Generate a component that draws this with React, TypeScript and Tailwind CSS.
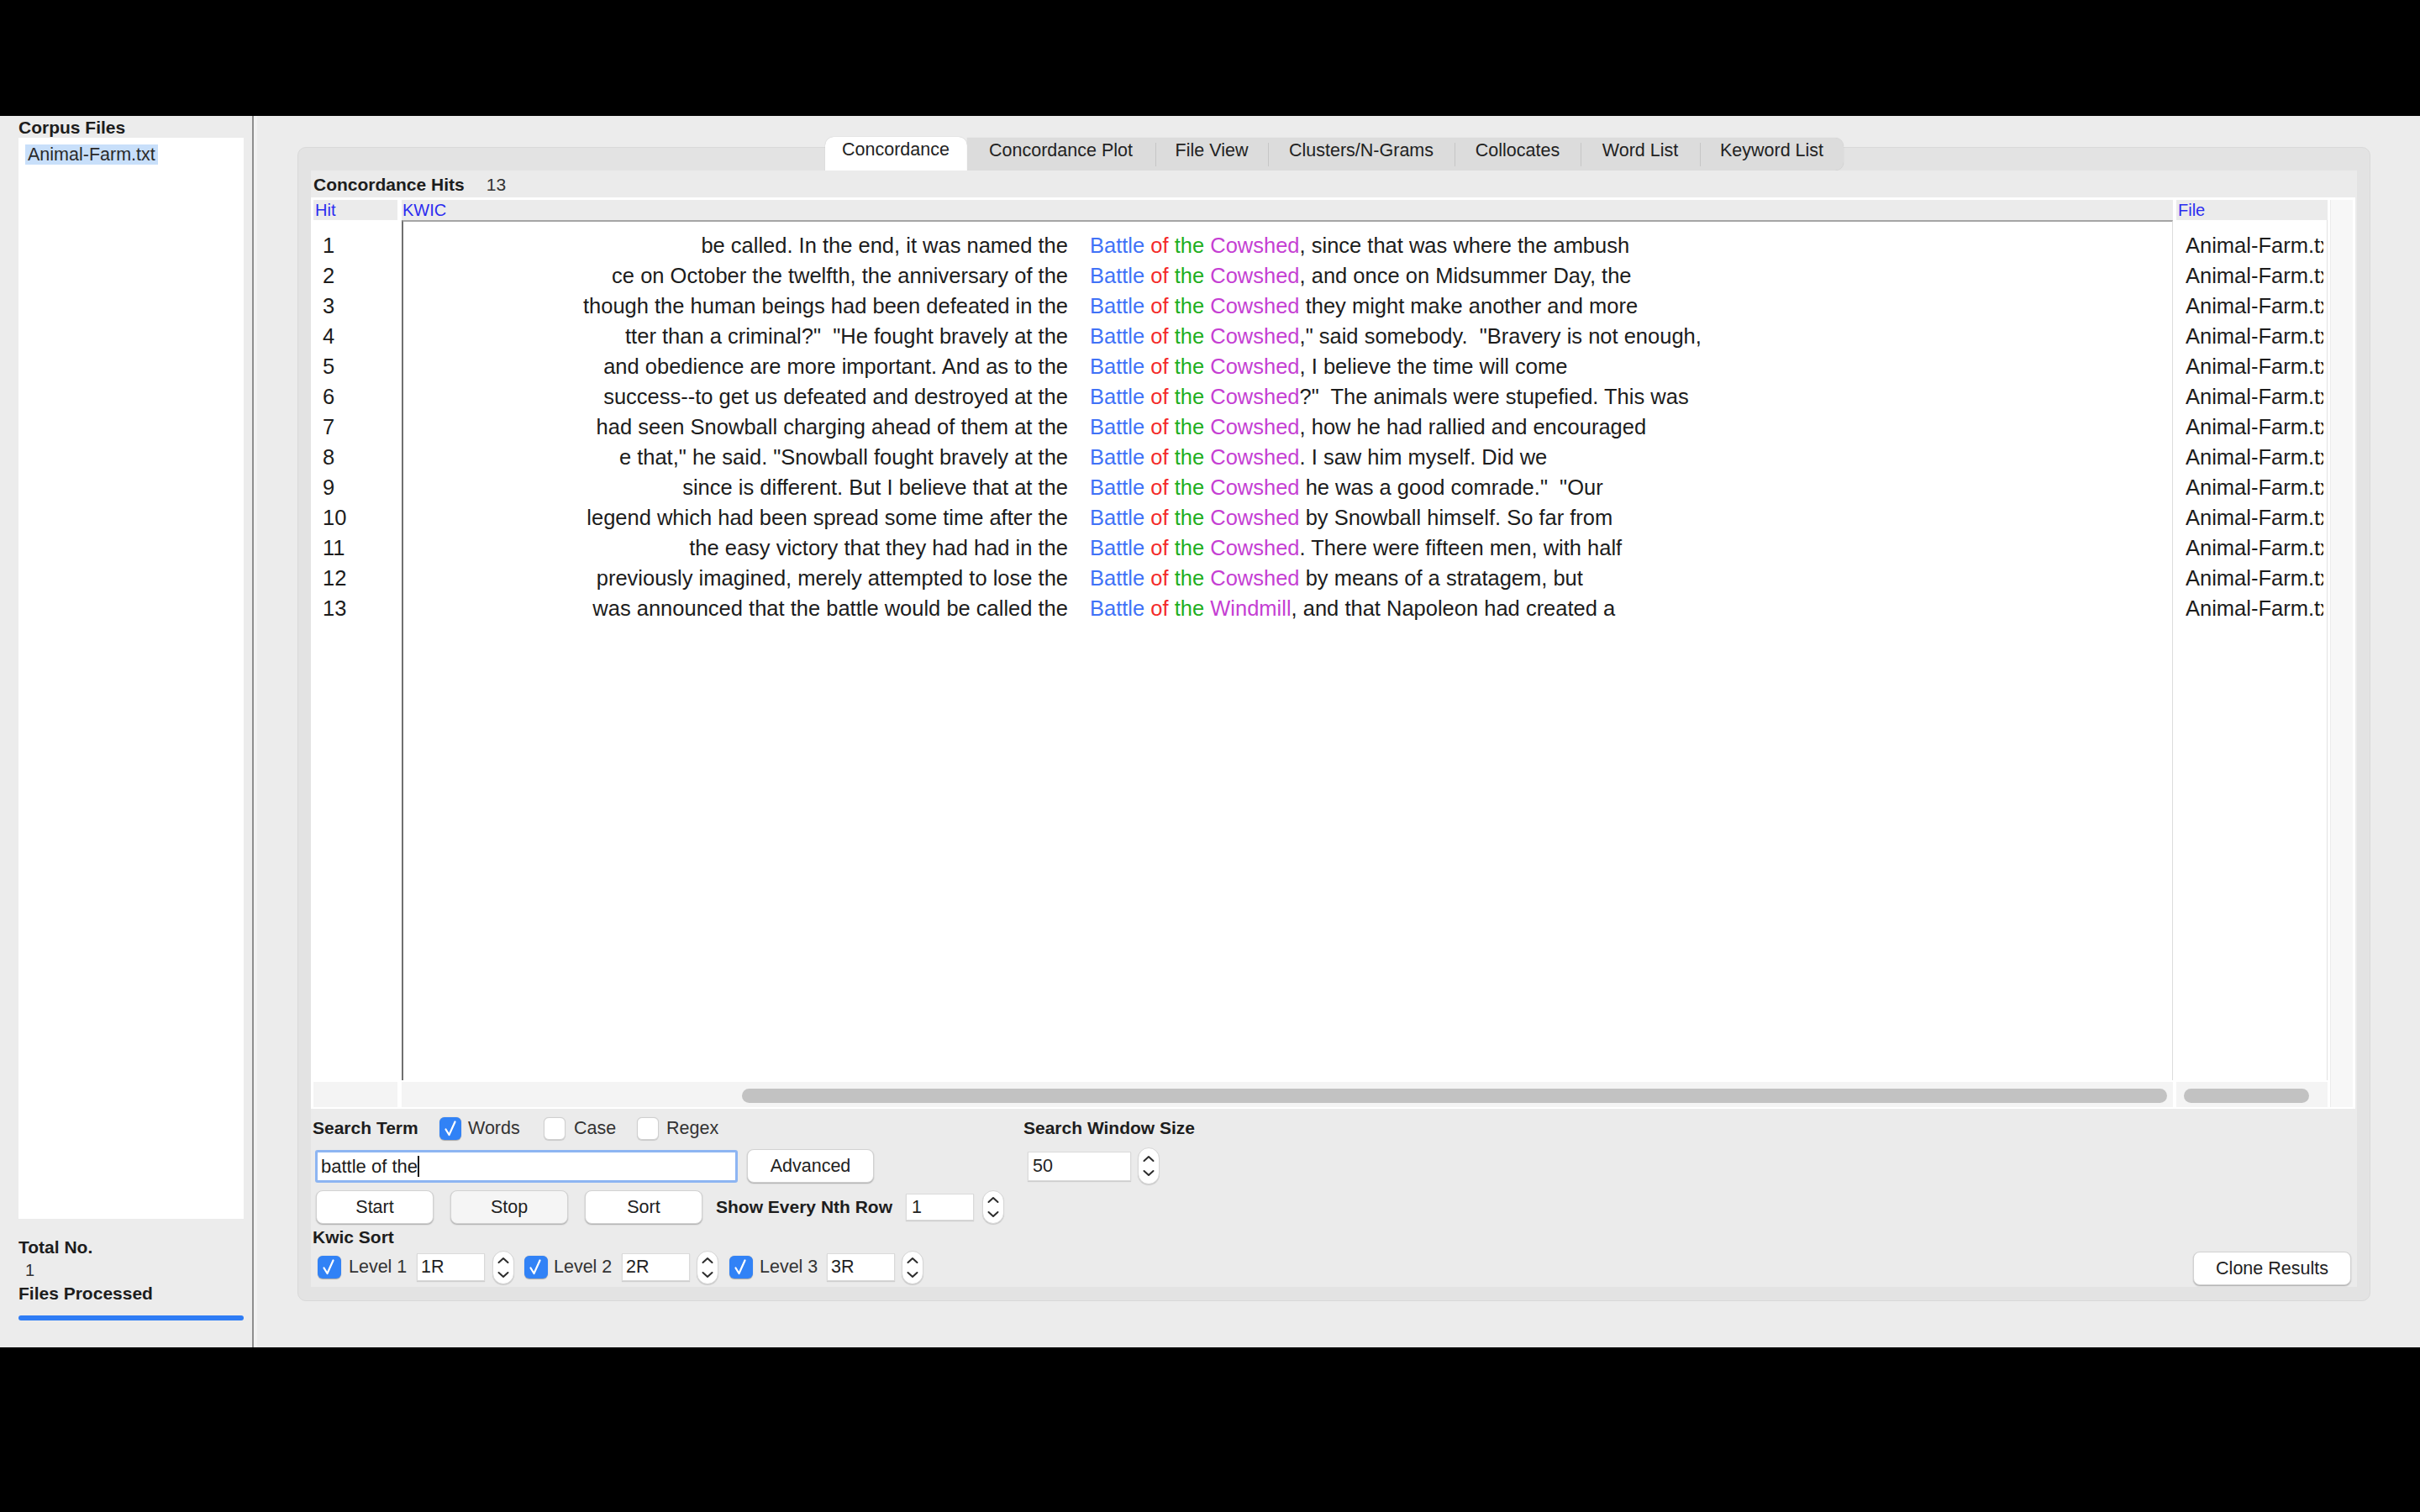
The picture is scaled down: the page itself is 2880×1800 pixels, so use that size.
import React from "react";

const rows: [string, string, string][] = [
  ["be called. In the end, it was named the", "Cowshed", ", since that was where the ambush"],
  ["ce on October the twelfth, the anniversary of the", "Cowshed", ", and once on Midsummer Day, the"],
  ["though the human beings had been defeated in the", "Cowshed", " they might make another and more"],
  ["tter than a criminal?\"  \"He fought bravely at the", "Cowshed", ",\" said somebody.  \"Bravery is not enough,"],
  ["and obedience are more important. And as to the", "Cowshed", ", I believe the time will come"],
  ["success--to get us defeated and destroyed at the", "Cowshed", "?\"  The animals were stupefied. This was"],
  ["had seen Snowball charging ahead of them at the", "Cowshed", ", how he had rallied and encouraged"],
  ["e that,\" he said. \"Snowball fought bravely at the", "Cowshed", ". I saw him myself. Did we"],
  ["since is different. But I believe that at the", "Cowshed", " he was a good comrade.\"  \"Our"],
  ["legend which had been spread some time after the", "Cowshed", " by Snowball himself. So far from"],
  ["the easy victory that they had had in the", "Cowshed", ". There were fifteen men, with half"],
  ["previously imagined, merely attempted to lose the", "Cowshed", " by means of a stratagem, but"],
  ["was announced that the battle would be called the", "Windmill", ", and that Napoleon had created a"],
];

function CheckBox({ checked, className }: { checked: boolean; className?: string }) {
  if (checked) {
    return (
      <div
        className={`w-[26px] h-[27px] rounded-[6px] bg-[#3182f6] shrink-0 shadow-[0_0.5px_1px_rgba(0,0,0,0.3)] ${className ?? ""}`}
      >
        <svg width="26" height="27" viewBox="0 0 26 27">
          <path
            d="M7.5 14.5 L11.5 21 L18.5 5.5"
            fill="none"
            stroke="white"
            strokeWidth="2.2"
            strokeLinecap="round"
            strokeLinejoin="round"
          />
        </svg>
      </div>
    );
  }
  return (
    <div
      className={`w-[26px] h-[27px] rounded-[6px] bg-white border border-[#d0d0d0] shadow-[0_0.5px_1px_rgba(0,0,0,0.15)] shrink-0 ${className ?? ""}`}
    />
  );
}

function Spinner({ className }: { className?: string }) {
  return (
    <div
      className={`w-[26px] h-[40px] rounded-full bg-white border border-[#d6d6d6] shadow-[0_1px_1px_rgba(0,0,0,0.15)] shrink-0 flex items-center justify-center ${className ?? ""}`}
    >
      <svg width="24" height="38" viewBox="0 0 24 38">
        <path d="M6.5 13 L12 8 L17.5 13" fill="none" stroke="#2b2b2b" strokeWidth="2" strokeLinecap="round" strokeLinejoin="round" />
        <path d="M6.5 25 L12 30 L17.5 25" fill="none" stroke="#2b2b2b" strokeWidth="2" strokeLinecap="round" strokeLinejoin="round" />
      </svg>
    </div>
  );
}

function Btn({ label, className }: { label: string; className?: string }) {
  return (
    <div
      className={`h-[40px] rounded-[8px] border-[0.5px] border-[#d2d2d2] shadow-[0_1px_1.5px_rgba(0,0,0,0.28)] flex items-center justify-center text-[21.5px] text-[#222] shrink-0 ${className ?? ""}`}
    >
      {label}
    </div>
  );
}

const tabs: [string, string][] = [
  ["Concordance Plot", "w-[224px]"],
  ["File View", "w-[133px]"],
  ["Clusters/N-Grams", "w-[221px]"],
  ["Collocates", "w-[149px]"],
  ["Word List", "w-[141px]"],
  ["Keyword List", "w-[170px]"],
];

export default function App() {
  return (
    <div className="w-[2880px] h-[1800px] bg-black flex flex-col overflow-hidden font-['Liberation_Sans',Arial,sans-serif] text-[#222]">
      <div className="h-[138px] shrink-0" />
      <div className="h-[1466px] shrink-0 flex bg-[#ececec]">
        {/* Left panel */}
        <div className="w-[302px] shrink-0 border-r-2 border-[#8e8e8e] flex flex-col pl-[22px] pr-[10px] pt-[2px]">
          <div className="h-[24px] leading-[24px] text-[21px] font-bold text-[#1d1d1d]">Corpus Files</div>
          <div className="h-[1287px] bg-white pt-[8px] pl-[8px]">
            <div className="inline-block h-[24px] leading-[24px] bg-[#c8dffa] px-[3px] text-[21.5px] text-[#2a2a2a]">
              Animal-Farm.txt
            </div>
          </div>
          <div className="mt-[21px] h-[26px] leading-[26px] text-[21px] font-bold text-[#1d1d1d]">Total No.</div>
          <div className="h-[28px] leading-[28px] text-[20px] pl-[8px] text-[#333]">1</div>
          <div className="h-[28px] leading-[28px] text-[21px] font-bold text-[#1d1d1d]">Files Processed</div>
          <div className="mt-[12px] h-[6px] rounded-full bg-[#2e7cf5]" />
        </div>
        <div className="w-[4px] shrink-0 bg-[#f2f2f2]" />

        {/* Main */}
        <div className="flex-1 pl-[48px] pt-[37px] pr-[59px]">
          <div className="h-[1374px] bg-[#e3e3e3] border border-[#d9d9d9] rounded-[10px] flex flex-col">
            {/* Tabs */}
            <div className="self-center -mt-[13px] h-[40px] flex shrink-0">
              <div className="w-[169px] h-[40px] bg-white rounded-t-[10px] leading-[30px] text-center text-[21.5px] text-[#222] shadow-[0_0_1px_rgba(0,0,0,0.25)]">
                Concordance
              </div>
              <div className="mt-[1px] h-[39px] bg-[#dcdcdc] rounded-r-[10px] flex items-start shadow-[0_0_1px_rgba(0,0,0,0.2)]">
                {tabs.map(([t, w], i) => (
                  <div key={t} className="flex items-start">
                    {i > 0 && <div className="w-[1px] h-[28px] mt-[6px] bg-[#c6c6c6]" />}
                    <div className={`${w} h-[39px] leading-[30px] text-center text-[21.5px] text-[#222]`}>{t}</div>
                  </div>
                ))}
              </div>
            </div>

            {/* Inner panel */}
            <div className="mx-[15px] h-[1329px] bg-[#ebebeb] flex flex-col">
              <div className="mt-[4px] h-[26px] leading-[26px] pl-[3px] flex text-[21px]">
                <span className="font-bold text-[#1d1d1d]">Concordance Hits</span>
                <span className="ml-[26px] text-[#333]">13</span>
              </div>

              {/* Table */}
              <div className="mt-[2px] h-[1085px] mr-[2px] bg-white flex pt-[3px] pl-[3px] pr-[3px] pb-[2px]">
                {/* Hit column */}
                <div className="w-[100px] shrink-0 flex flex-col">
                  <div className="h-[24px] leading-[24px] bg-[#ebebeb] pl-[2px] text-[20px] text-[#2b2bf0]">Hit</div>
                  <div className="h-[1024px] bg-white pt-[12px] pl-[11px]">
                    {rows.map((_, i) => (
                      <div key={i} className="h-[36px] leading-[36px] text-[25.5px] text-[#1c1c1c]">
                        {i + 1}
                      </div>
                    ))}
                  </div>
                  <div className="mt-[2px] h-[30px] bg-[#f4f4f4]" />
                </div>

                {/* KWIC column */}
                <div className="ml-[5px] w-[2108px] shrink-0 flex flex-col">
                  <div className="h-[24px] leading-[24px] bg-[#ebebeb] pl-[1px] text-[20px] text-[#2b2bf0]">KWIC</div>
                  <div className="h-[1024px] bg-white border-t-2 border-t-[#a5a5a5] border-l-2 border-l-[#707070] border-r border-r-[#dddddd] pt-[10px]">
                    {rows.map((r, i) => (
                      <div key={i} className="h-[36px] leading-[36px] flex whitespace-pre text-[25.5px] text-[#1c1c1c]">
                        <div className="w-[791px] shrink-0 text-right overflow-hidden">{r[0]}</div>
                        <div className="ml-[26px]">
                          <span className="text-[#3f72f7]">Battle</span>
                          {" "}
                          <span className="text-[#f42a2a]">of</span>
                          {" "}
                          <span className="text-[#1faf1f]">the</span>
                          {" "}
                          <span className="text-[#c53fd3]">{r[1]}</span>
                          {r[2]}
                        </div>
                      </div>
                    ))}
                  </div>
                  <div className="mt-[2px] h-[30px] bg-[#f4f4f4] pt-[8px] pl-[405px]">
                    <div className="w-[1696px] h-[17px] rounded-full bg-[#c2c2c2]" />
                  </div>
                </div>

                {/* File column */}
                <div className="ml-[4px] w-[180px] shrink-0 flex flex-col">
                  <div className="h-[24px] leading-[24px] bg-[#ebebeb] pl-[2px] text-[20px] text-[#2b2bf0]">File</div>
                  <div className="h-[1024px] bg-white border-r border-[#e2e2e2] pt-[12px] pl-[11px]">
                    {rows.map((_, i) => (
                      <div key={i} className="w-[164px] h-[36px] leading-[36px] overflow-hidden whitespace-nowrap text-[25.5px] text-[#1c1c1c]">
                        Animal-Farm.txt
                      </div>
                    ))}
                  </div>
                  <div className="mt-[2px] h-[30px] bg-[#f4f4f4] pt-[8px] pl-[9px]">
                    <div className="w-[149px] h-[17px] rounded-full bg-[#c2c2c2]" />
                  </div>
                </div>

                {/* Vertical scroll column */}
                <div className="ml-[3px] w-[27px] shrink-0 bg-[#f7f7f7] border-l border-[#ececec]" />
              </div>

              {/* Controls */}
              <div className="flex-1 flex">
                <div className="w-[848px] shrink-0 flex flex-col">
                  {/* Row A */}
                  <div className="mt-[8px] h-[30px] flex items-center pl-[2px]">
                    <div className="w-[151px] text-[21px] font-bold text-[#1d1d1d]">Search Term</div>
                    <CheckBox checked />
                    <div className="ml-[8px] w-[90px] text-[21.5px] text-[#333]">Words</div>
                    <CheckBox checked={false} />
                    <div className="ml-[10px] w-[75px] text-[21.5px] text-[#333]">Case</div>
                    <CheckBox checked={false} />
                    <div className="ml-[9px] text-[21.5px] text-[#333]">Regex</div>
                  </div>
                  {/* Row B */}
                  <div className="mt-[8px] h-[44px] flex items-center">
                    <div className="ml-[5px] w-[503px] h-[39px] rounded-[3px] border-[3px] border-[#8db5f2] bg-white flex items-center pl-[4px] text-[22px] text-[#1c1c1c]">
                      <span className="whitespace-pre">battle of the</span>
                      <span className="w-[2px] h-[25px] bg-[#111]" />
                    </div>
                    <Btn label="Advanced" className="ml-[11px] w-[151px] bg-white" />
                  </div>
                  {/* Row C */}
                  <div className="mt-[4px] h-[46px] flex items-center">
                    <Btn label="Start" className="ml-[6px] w-[140px] bg-white" />
                    <Btn label="Stop" className="ml-[20px] w-[140px] bg-[#f5f5f5]" />
                    <Btn label="Sort" className="ml-[20px] w-[140px] bg-white" />
                    <div className="ml-[16px] w-[226px] text-[21px] font-bold text-[#1d1d1d] whitespace-nowrap">Show Every Nth Row</div>
                    <div className="w-[81px] h-[32px] bg-white border border-[#dadada] shadow-[0_1px_1px_rgba(0,0,0,0.12)] pl-[6px] leading-[30px] text-[21.5px] text-[#222]">
                      1
                    </div>
                    <Spinner className="ml-[10px]" />
                  </div>
                  {/* Row D */}
                  <div className="h-[26px] leading-[26px] pl-[2px] text-[21px] font-bold text-[#1d1d1d]">Kwic Sort</div>
                  {/* Row E */}
                  <div className="mt-[4px] h-[37px] flex items-center">
                    <CheckBox checked className="ml-[8px] w-[28px]" />
                    <div className="ml-[9px] w-[81px] text-[21.5px] text-[#333]">Level 1</div>
                    <div className="w-[81px] h-[33px] bg-white border border-[#dadada] shadow-[0_1px_1px_rgba(0,0,0,0.12)] pl-[4px] leading-[31px] text-[21.5px] text-[#222]">
                      1R
                    </div>
                    <Spinner className="ml-[9px]" />
                    <CheckBox checked className="ml-[12px] w-[28px]" />
                    <div className="ml-[7px] w-[81px] text-[21.5px] text-[#333]">Level 2</div>
                    <div className="w-[81px] h-[33px] bg-white border border-[#dadada] shadow-[0_1px_1px_rgba(0,0,0,0.12)] pl-[4px] leading-[31px] text-[21.5px] text-[#222]">
                      2R
                    </div>
                    <Spinner className="ml-[8px]" />
                    <CheckBox checked className="ml-[13px] w-[28px]" />
                    <div className="ml-[8px] w-[80px] text-[21.5px] text-[#333]">Level 3</div>
                    <div className="w-[81px] h-[33px] bg-white border border-[#dadada] shadow-[0_1px_1px_rgba(0,0,0,0.12)] pl-[4px] leading-[31px] text-[21.5px] text-[#222]">
                      3R
                    </div>
                    <Spinner className="ml-[8px]" />
                  </div>
                </div>

                {/* Search Window Size */}
                <div className="shrink-0 flex flex-col">
                  <div className="mt-[8px] h-[30px] leading-[30px] text-[21px] font-bold text-[#1d1d1d]">Search Window Size</div>
                  <div className="mt-[8px] h-[44px] flex items-center">
                    <div className="ml-[5px] w-[123px] h-[35px] bg-white border border-[#dadada] shadow-[0_1px_1px_rgba(0,0,0,0.12)] pl-[5px] leading-[33px] text-[21.5px] text-[#222]">
                      50
                    </div>
                    <Spinner className="ml-[8px] h-[44px]" />
                  </div>
                </div>

                <div className="flex-1" />

                <div className="self-end mb-[2px] mr-[7px]">
                  <Btn label="Clone Results" className="w-[188px] bg-white" />
                </div>
              </div>
            </div>
          </div>
        </div>
      </div>
      <div className="flex-1" />
    </div>
  );
}
